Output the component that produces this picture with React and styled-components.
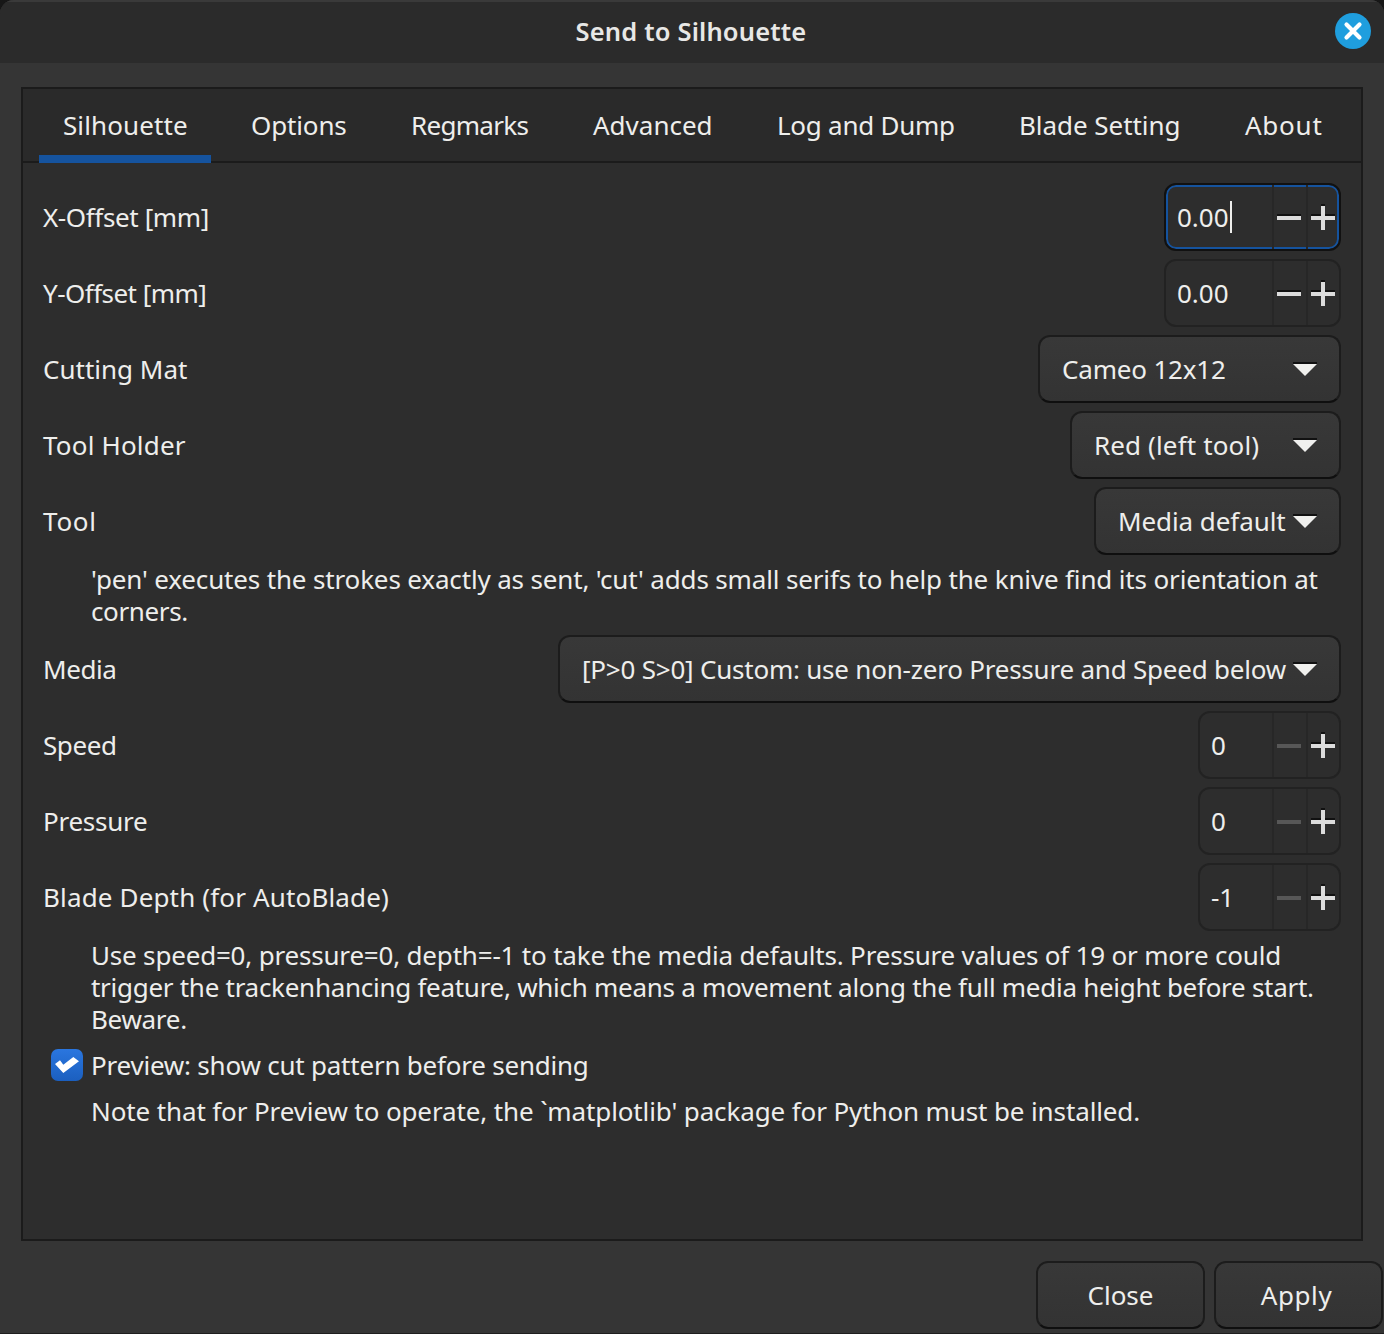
import React from "react";
import styled, { createGlobalStyle } from "styled-components";

const Global = createGlobalStyle`
  html, body { margin: 0; padding: 0; background: #171717; }
  * { box-sizing: border-box; }
`;

const Win = styled.div`
  width: 1384px; height: 1334px; background: #353535; color: #eeeeec;
  font-family: "Noto Sans", "Open Sans", sans-serif; font-size: 26px; line-height: 32px;
  border-radius: 14px 14px 0 0; overflow: hidden; display: flex; flex-direction: column;
  border-bottom: 1px solid #1e1e1e;
`;
const TitleBar = styled.header`
  height: 63px; flex: none; background: #2b2b2b; border-top: 2px solid #3a3a3a;
  display: grid; grid-template-columns: 1fr auto 1fr; align-items: center; padding: 0 13px 3px 11px;
`;
const Title = styled.h1`
  grid-column: 2; margin: 0 0 1px; font-size: 25.5px; font-weight: 600; line-height: 32px; letter-spacing: 0.17px;
  color: #e8e8e6; white-space: nowrap;
`;
const CloseBall = styled.button`
  grid-column: 3; justify-self: end; width: 36px; height: 36px; border-radius: 50%; border: 0; padding: 0;
  background: #1f9ede; display: flex; align-items: center; justify-content: center;
`;
const Notebook = styled.section`
  margin: 24px 21px 0; height: 1154px; flex: none; border: 2px solid #1b1b1b; background: #2d2d2d;
  display: flex; flex-direction: column;
`;
const TabBar = styled.nav`
  height: 74px; flex: none; background: #2a2a2a; border-bottom: 2px solid #1b1b1b;
  display: flex; gap: 16px; padding-left: 16px;
`;
const Tab = styled.div`
  width: ${p => p.$w}px; height: 74px; flex: none; padding: 20px 0 0 ${p => p.$pl || 24}px; white-space: nowrap;
  letter-spacing: ${p => p.$ls || 0}px;
  border-bottom: ${p => (p.$active ? "8px solid #15539e" : "0")};
`;
const Page = styled.div`
  flex: 1; display: flex; flex-direction: column; padding: 20px 20px 0 20px;
`;
const Row = styled.div`
  height: 68px; flex: none; margin-bottom: 8px; display: flex; align-items: center; justify-content: space-between;
`;
const Label = styled.span`
  white-space: nowrap; letter-spacing: ${p => p.$ls || 0}px;
`;
const Spin = styled.div`
  width: ${p => p.$w}px; height: 68px; display: flex; border-radius: 12px; background: #2d2d2d;
  border: 2px solid ${p => (p.$focus ? "#111" : "#222")};
  box-shadow: ${p => (p.$focus ? "inset 0 0 0 2px #15539e" : "none")};
  overflow: hidden;
`;
const SpinText = styled.div`
  flex: 1; padding-left: 11px; display: flex; align-items: center;
`;
const Caret = styled.i`
  display: inline-block; width: 2px; height: 32px; background: #eeeeec; margin-left: 1px;
`;
const SpinBtn = styled.div`
  width: ${p => p.$w}px; flex: none; border-left: 2px solid #272727; display: flex; align-items: center;
  padding-left: 3px;
`;
const Drop = styled.div`
  width: ${p => p.$w}px; height: 68px; display: flex; align-items: center; justify-content: space-between;
  padding: 0 22px; border-radius: 12px; border: 2px solid #1c1c1c; border-bottom-color: #0f0f0f;
  background: linear-gradient(#383838, #333333); white-space: nowrap;
`;
const Help = styled.div`
  padding-left: 48px; margin-bottom: ${p => p.$mb}px; white-space: nowrap;
`;
const Line = styled.div`
  letter-spacing: ${p => p.$ls || 0}px;
`;
const CheckRow = styled.div`
  display: flex; align-items: center; height: 32px; margin: ${p => p.$mt || 0}px 0 14px 8px; gap: 8px;
`;
const Check = styled.div`
  width: 32px; height: 32px; border-radius: 7px; background: linear-gradient(#2a76df, #1b5fbf);
  display: flex; align-items: center; justify-content: center;
`;
const Footer = styled.footer`
  flex: 1; display: flex; justify-content: flex-end; gap: 9px; padding: 20px 1px 0 0;
`;
const Btn = styled.button`
  width: 169px; height: 68px; border-radius: 12px; border: 2px solid #1c1c1c; border-bottom-color: #0f0f0f;
  background: linear-gradient(#383838, #333333); color: #eeeeec; font: inherit;
  padding: 0 ${p => p.$pr || 0}px 0 0;
  letter-spacing: ${p => p.$ls || 0}px;
`;

const Minus = ({ dim }) => (
  <svg width="24" height="26" viewBox="0 0 24 26">
    {!dim && <rect x="0" y="10" width="24" height="2" fill="#111" />}
    <rect x="0" y="12" width="24" height="4" fill={dim ? "#575757" : "#dcdcdc"} />
  </svg>
);
const Plus = () => (
  <svg width="24" height="26" viewBox="0 0 24 26">
    <rect x="10" y="0" width="4" height="2" fill="#111" />
    <rect x="0" y="10" width="24" height="2" fill="#111" />
    <rect x="10" y="2" width="4" height="24" fill="#dcdcdc" />
    <rect x="0" y="12" width="24" height="4" fill="#dcdcdc" />
  </svg>
);
const Arrow = () => (
  <svg width="24" height="14" viewBox="0 0 24 14">
    <rect x="0" y="0" width="24" height="2" fill="#111" />
    <path d="M0 2H24L12 14Z" fill="#f0f0ee" />
  </svg>
);

const SpinBox = ({ w, value, focus, dim }) => (
  <Spin $w={w} $focus={focus}>
    <SpinText>{value}{focus && <Caret />}</SpinText>
    <SpinBtn $w={34}><Minus dim={dim} /></SpinBtn>
    <SpinBtn $w={33}><Plus /></SpinBtn>
  </Spin>
);

const tabs = [
  ["Silhouette", 172, 0.1, 24],
  ["Options", 144, -0.14, 24],
  ["Regmarks", 166, -0.7, 24],
  ["Advanced", 168, 0, 24],
  ["Log and Dump", 226, -0.25, 24],
  ["Blade Setting", 209, -0.05, 24],
  ["About", 125, 0.75, 25],
];

export default function App() {
  return (
    <>
      <Global />
      <Win>
        <TitleBar>
          <Title>Send to Silhouette</Title>
          <CloseBall aria-label="Close">
            <svg width="20" height="20" viewBox="0 0 20 20">
              <path d="M3.5 3.5L16.5 16.5M16.5 3.5L3.5 16.5" stroke="#fff" strokeWidth="4.2" strokeLinecap="round" />
            </svg>
          </CloseBall>
        </TitleBar>
        <Notebook>
          <TabBar>
            {tabs.map(([t, w, ls, pl], i) => (
              <Tab key={t} $w={w} $ls={ls} $pl={pl} $active={i === 0}>{t}</Tab>
            ))}
          </TabBar>
          <Page>
            <Row><Label $ls={-0.38}>X-Offset [mm]</Label><SpinBox w={177} value="0.00" focus /></Row>
            <Row><Label $ls={-0.54}>Y-Offset [mm]</Label><SpinBox w={177} value="0.00" /></Row>
            <Row><Label>Cutting Mat</Label><Drop $w={303}><Label $ls={-0.18}>Cameo 12x12</Label><Arrow /></Drop></Row>
            <Row><Label $ls={0.18}>Tool Holder</Label><Drop $w={271}><Label $ls={0.13}>Red (left tool)</Label><Arrow /></Drop></Row>
            <Row><Label $ls={0.75}>Tool</Label><Drop $w={247}><Label $ls={-0.08}>Media default</Label><Arrow /></Drop></Row>
            <Help $mb={8}>
              <Line $ls={-0.153}>'pen' executes the strokes exactly as sent, 'cut' adds small serifs to help the knive find its orientation at</Line>
              <Line $ls={-0.37}>corners.</Line>
            </Help>
            <Row>
              <Label $ls={-0.4}>Media</Label>
              <Drop $w={783}><Label $ls={-0.22}>[P&gt;0 S&gt;0] Custom: use non-zero Pressure and Speed below</Label><Arrow /></Drop>
            </Row>
            <Row><Label $ls={-0.4}>Speed</Label><SpinBox w={143} value="0" dim /></Row>
            <Row><Label $ls={-0.25}>Pressure</Label><SpinBox w={143} value="0" dim /></Row>
            <Row><Label $ls={0.15}>Blade Depth (for AutoBlade)</Label><SpinBox w={143} value="-1" dim /></Row>
            <Help $mb={0}>
              <Line $ls={-0.19}>Use speed=0, pressure=0, depth=-1 to take the media defaults. Pressure values of 19 or more could</Line>
              <Line $ls={-0.277}>trigger the trackenhancing feature, which means a movement along the full media height before start.</Line>
              <Line $ls={-0.3}>Beware.</Line>
            </Help>
            <CheckRow $mt={14}>
              <Check>
                <svg width="24" height="16" viewBox="0 0 24 16">
                  <polygon points="0,7 8.3,16 24,4.3 18.3,0 8.3,7.7 5,3.3" fill="#fff" />
                </svg>
              </Check>
              <Label $ls={-0.22}>Preview: show cut pattern before sending</Label>
            </CheckRow>
            <Help $mb={0}>
              <Line $ls={-0.12}>Note that for Preview to operate, the `matplotlib' package for Python must be installed.</Line>
            </Help>
          </Page>
        </Notebook>
        <Footer>
          <Btn>Close</Btn>
          <Btn $ls={0.6} $pr={4}>Apply</Btn>
        </Footer>
      </Win>
    </>
  );
}
